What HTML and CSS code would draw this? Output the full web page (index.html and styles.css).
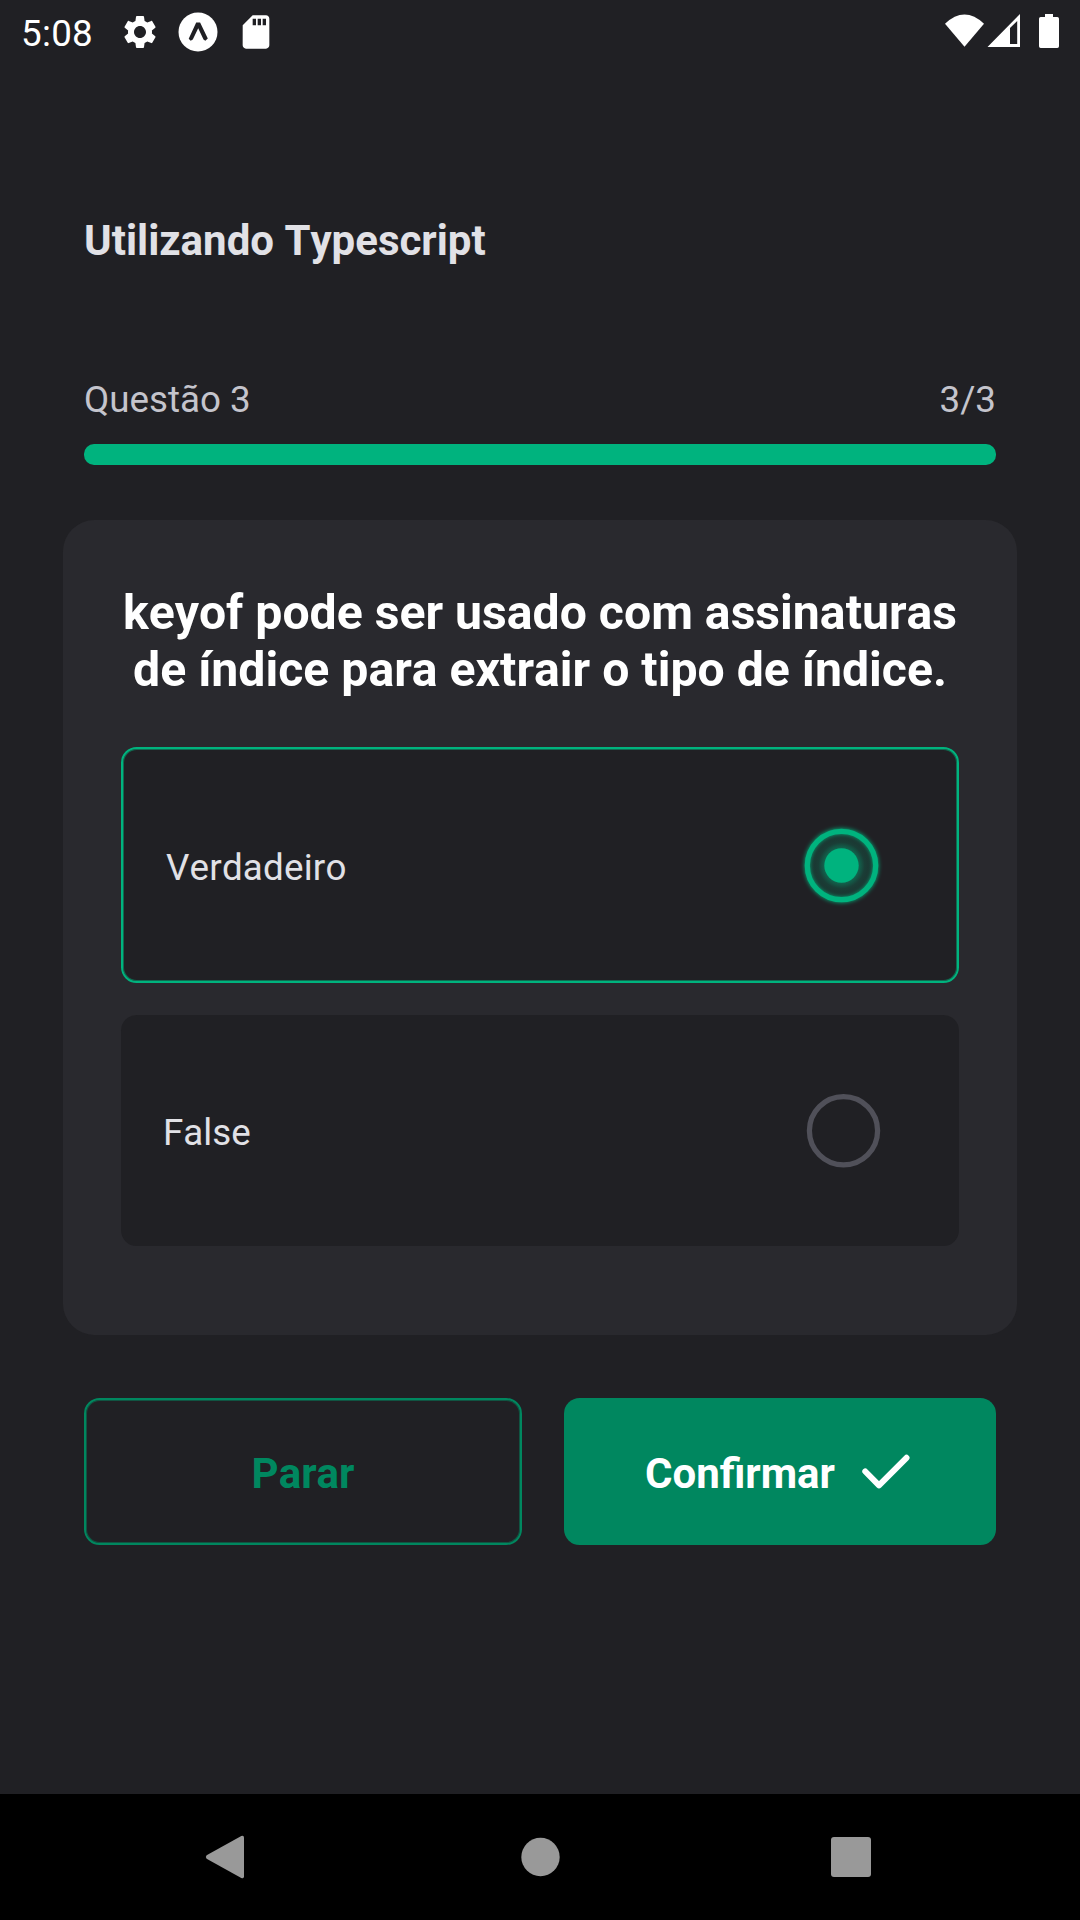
FILE: index.html
```html
<!DOCTYPE html>
<html lang="pt-BR">
<head>
  <meta charset="utf-8">
  <title>Quiz</title>
  <link rel="stylesheet" href="styles.css">
</head>
<body>
  <div class="screen">
    <header class="status-bar">
      <div class="status-left">
        <span class="clock">5:08</span>
        <svg class="icon-gear" viewBox="0 0 24 24"><path d="M19.14 12.94c.04-.3.06-.61.06-.94 0-.32-.02-.64-.07-.94l2.03-1.58c.18-.14.23-.41.12-.61l-1.92-3.32c-.12-.22-.37-.29-.59-.22l-2.39.96c-.5-.38-1.03-.7-1.62-.94l-.36-2.54c-.04-.24-.24-.41-.48-.41h-3.84c-.24 0-.43.17-.47.41l-.36 2.54c-.59.24-1.13.57-1.62.94l-2.39-.96c-.22-.08-.47 0-.59.22L2.74 8.87c-.12.21-.08.47.12.61l2.03 1.58c-.05.3-.09.63-.09.94s.02.64.07.94l-2.03 1.58c-.18.14-.23.41-.12.61l1.92 3.32c.12.22.37.29.59.22l2.39-.96c.5.38 1.03.7 1.62.94l.36 2.54c.05.24.24.41.48.41h3.84c.24 0 .44-.17.47-.41l.36-2.54c.59-.24 1.13-.56 1.62-.94l2.39.96c.22.08.47 0 .59-.22l1.92-3.32c.12-.22.07-.47-.12-.61l-2.01-1.58zM12 15.6c-1.98 0-3.6-1.62-3.6-3.6s1.62-3.6 3.6-3.6 3.6 1.62 3.6 3.6-1.62 3.6-3.6 3.6z"/></svg>
        <svg class="icon-expo" viewBox="0 0 40 40"><circle cx="20" cy="20" r="19.5"/><path class="expo-mark" d="M18.2 10.4h3.9l7.7 16.1-2.5 2.2-1.8-1.1-5.3-11.3-5.4 11.3-2.1 1.1-2-2z"/></svg>
        <svg class="icon-sd" viewBox="0 0 24 24"><path d="M18 2h-8L4.020 8 4 20c0 1.100.9 2 2 2h12c1.100 0 2-.9 2-2V4c0-1.100-.9-2-2-2zm-6 6h-2V4h2v4zm3 0h-2V4h2v4zm3 0h-2V4h2v4z"/></svg>
      </div>
      <svg class="status-right" viewBox="0 0 116 36">
        <path d="M1 10.800Q20.500 -7.600 40 10.800L20.500 33.800z"/>
        <path fill-rule="evenodd" d="M43.500 34L76 1V34zM66 15V31H73.200V8z"/>
        <path d="M101 1h8v3h4.300q1.700 0 1.700 1.700v27.600q0 1.700-1.700 1.700h-16.600q-1.700 0-1.700-1.700V5.700q0-1.700 1.700-1.700h4.300z"/>
      </svg>
    </header>

    <main class="content">
      <h1 class="title">Utilizando Typescript</h1>

      <div class="progress-info">
        <span>Questão 3</span>
        <span>3/3</span>
      </div>
      <div class="progress-track"><div class="progress-fill" style="width: 100%"></div></div>

      <section class="card">
        <h2 class="question">keyof pode ser usado com assinaturas<br>de índice para extrair o tipo de índice.</h2>
        <div class="option option-selected">
          <span class="option-label">Verdadeiro</span>
          <svg class="radio" viewBox="0 0 100 100">
            <defs>
              <filter id="ring-glow" x="-20%" y="-20%" width="140%" height="140%"><feGaussianBlur stdDeviation="2.2"/></filter>
              <radialGradient id="dot-glow">
                <stop offset="0.48" stop-color="#00b37e" stop-opacity="0.5"/>
                <stop offset="0.68" stop-color="#00b37e" stop-opacity="0.2"/>
                <stop offset="0.92" stop-color="#00b37e" stop-opacity="0.13"/>
              </radialGradient>
            </defs>
            <circle class="ring-blur" cx="49.500" cy="50.500" r="34.300" filter="url(#ring-glow)"/>
            <circle cx="49.500" cy="50.500" r="34" fill="url(#dot-glow)"/>
            <circle class="ring" cx="49.500" cy="50.500" r="34.200"/>
            <circle class="dot" cx="49.500" cy="50.500" r="17.200"/>
          </svg>
        </div>
        <div class="option">
          <span class="option-label">False</span>
          <svg class="radio" viewBox="0 0 100 100">
            <circle class="ring-off" cx="49.500" cy="49.800" r="34.100"/>
          </svg>
        </div>
      </section>

      <div class="actions">
        <button class="btn btn-outline">Parar</button>
        <button class="btn btn-solid">
          <span>Confirmar</span>
          <svg class="icon-check" viewBox="0 0 48 36"><path d="M3.300 17.500L17 31.300L44.500 3.800"/></svg>
        </button>
      </div>
    </main>

    <nav class="nav-bar">
      <svg viewBox="0 0 44 44"><path d="M2.600 20.300L37.300 1.100Q40 0 40 2.800V41.200Q40 44 37.300 42.900L2.600 23.700Q1 22 2.600 20.300z"/></svg>
      <svg viewBox="0 0 44 44"><circle cx="23.500" cy="22" r="19.200"/></svg>
      <svg viewBox="0 0 44 44"><rect x="2" y="2" width="40" height="40" rx="3"/></svg>
    </nav>
  </div>
</body>
</html>
```

FILE: styles.css
```css
* {
  box-sizing: border-box;
}

body {
  margin: 0;
  background: #202024;
  color: #e1e1e6;
  font-family: Roboto, "Liberation Sans", sans-serif;
  font-size: 36.75px;
  font-kerning: none;
}

h1,
h2 {
  margin: 0;
  font-weight: 700;
}

svg {
  display: block;
  flex: none;
}

.screen {
  display: flex;
  flex-direction: column;
  width: 1080px;
  height: 1920px;
}

.status-bar {
  display: flex;
  justify-content: space-between;
  align-items: flex-start;
  height: 63px;
  padding: 0 20px 0 21px;
  color: #fff;
  fill: #fff;
}

.status-left {
  display: flex;
  align-items: center;
  height: 63px;
}

.clock {
  width: 99px;
  padding-top: 4px;
  letter-spacing: 0.3px;
}

.icon-gear,
.icon-sd {
  width: 40px;
  height: 40px;
}

.icon-expo {
  width: 40px;
  height: 40px;
  margin: 0 18px;
}

.expo-mark {
  fill: #202024;
}

.status-right {
  width: 116px;
  height: 36px;
  margin-top: 13px;
}

.content {
  flex: 1;
  padding: 153px 63px 0;
}

.title {
  height: 50px;
  padding-left: 21px;
  font-size: 42px;
  line-height: 50px;
}

.progress-info {
  display: flex;
  justify-content: space-between;
  margin-top: 112px;
  padding: 0 21px;
  height: 44px;
  line-height: 44px;
  color: #c4c4cc;
}

.progress-track {
  height: 21px;
  margin: 22px 21px 0;
}

.progress-fill {
  height: 100%;
  border-radius: 10px;
  background: #00b37e;
}

.card {
  height: 815px;
  margin-top: 55px;
  padding: 64px 58px 0;
  border-radius: 31.5px;
  background: #29292e;
}

.question {
  margin-bottom: 49px;
  color: #fff;
  font-size: 48.18px;
  line-height: 57px;
  text-align: center;
  white-space: nowrap;
}

.option {
  display: flex;
  justify-content: space-between;
  align-items: center;
  height: 231px;
  padding: 0 65px 0 42px;
  border-radius: 15.75px;
  background: #202024;
}

.option-selected {
  height: 236px;
  margin-bottom: 32px;
  padding: 0 65px 0 43px;
  border: 2px solid #00b37e;
  box-shadow: inset 0 0 0 1px rgba(0, 179, 126, 0.5);
}

.option-label {
  padding-top: 3px;
}

.option-selected .option-label {
  padding-top: 4px;
  letter-spacing: 0.2px;
}

.radio {
  width: 100px;
  height: 100px;
}

.ring,
.ring-blur,
.ring-off {
  fill: none;
  stroke: #00b37e;
  stroke-width: 5.25;
}

.ring-off {
  stroke: #505059;
}

.dot {
  fill: #00b37e;
}

.actions {
  display: flex;
  gap: 42px;
  margin-top: 63px;
  padding: 0 21px;
}

.btn {
  display: flex;
  align-items: center;
  justify-content: center;
  height: 147px;
  padding: 3px 0 0;
  border: 0;
  border-radius: 15.75px;
  font-family: inherit;
  font-size: 42px;
  font-weight: 700;
  font-kerning: inherit;
}

.btn-outline {
  width: 438px;
  border: 2px solid #00875f;
  box-shadow: inset 0 0 0 1px rgba(0, 135, 95, 0.5);
  background: transparent;
  color: #00875f;
}

.btn-solid {
  width: 432px;
  gap: 27px;
  padding-right: 5px;
  background: #00875f;
  color: #fff;
}

.icon-check {
  width: 48px;
  height: 36px;
  margin-bottom: 3px;
  fill: none;
  stroke: #fff;
  stroke-width: 6;
  stroke-linecap: round;
  stroke-linejoin: round;
}

.nav-bar {
  display: flex;
  justify-content: space-between;
  align-items: center;
  height: 126px;
  padding: 0 207px 0 204px;
  background: #000;
  fill: #999;
}

.nav-bar svg {
  width: 44px;
  height: 44px;
}
```
